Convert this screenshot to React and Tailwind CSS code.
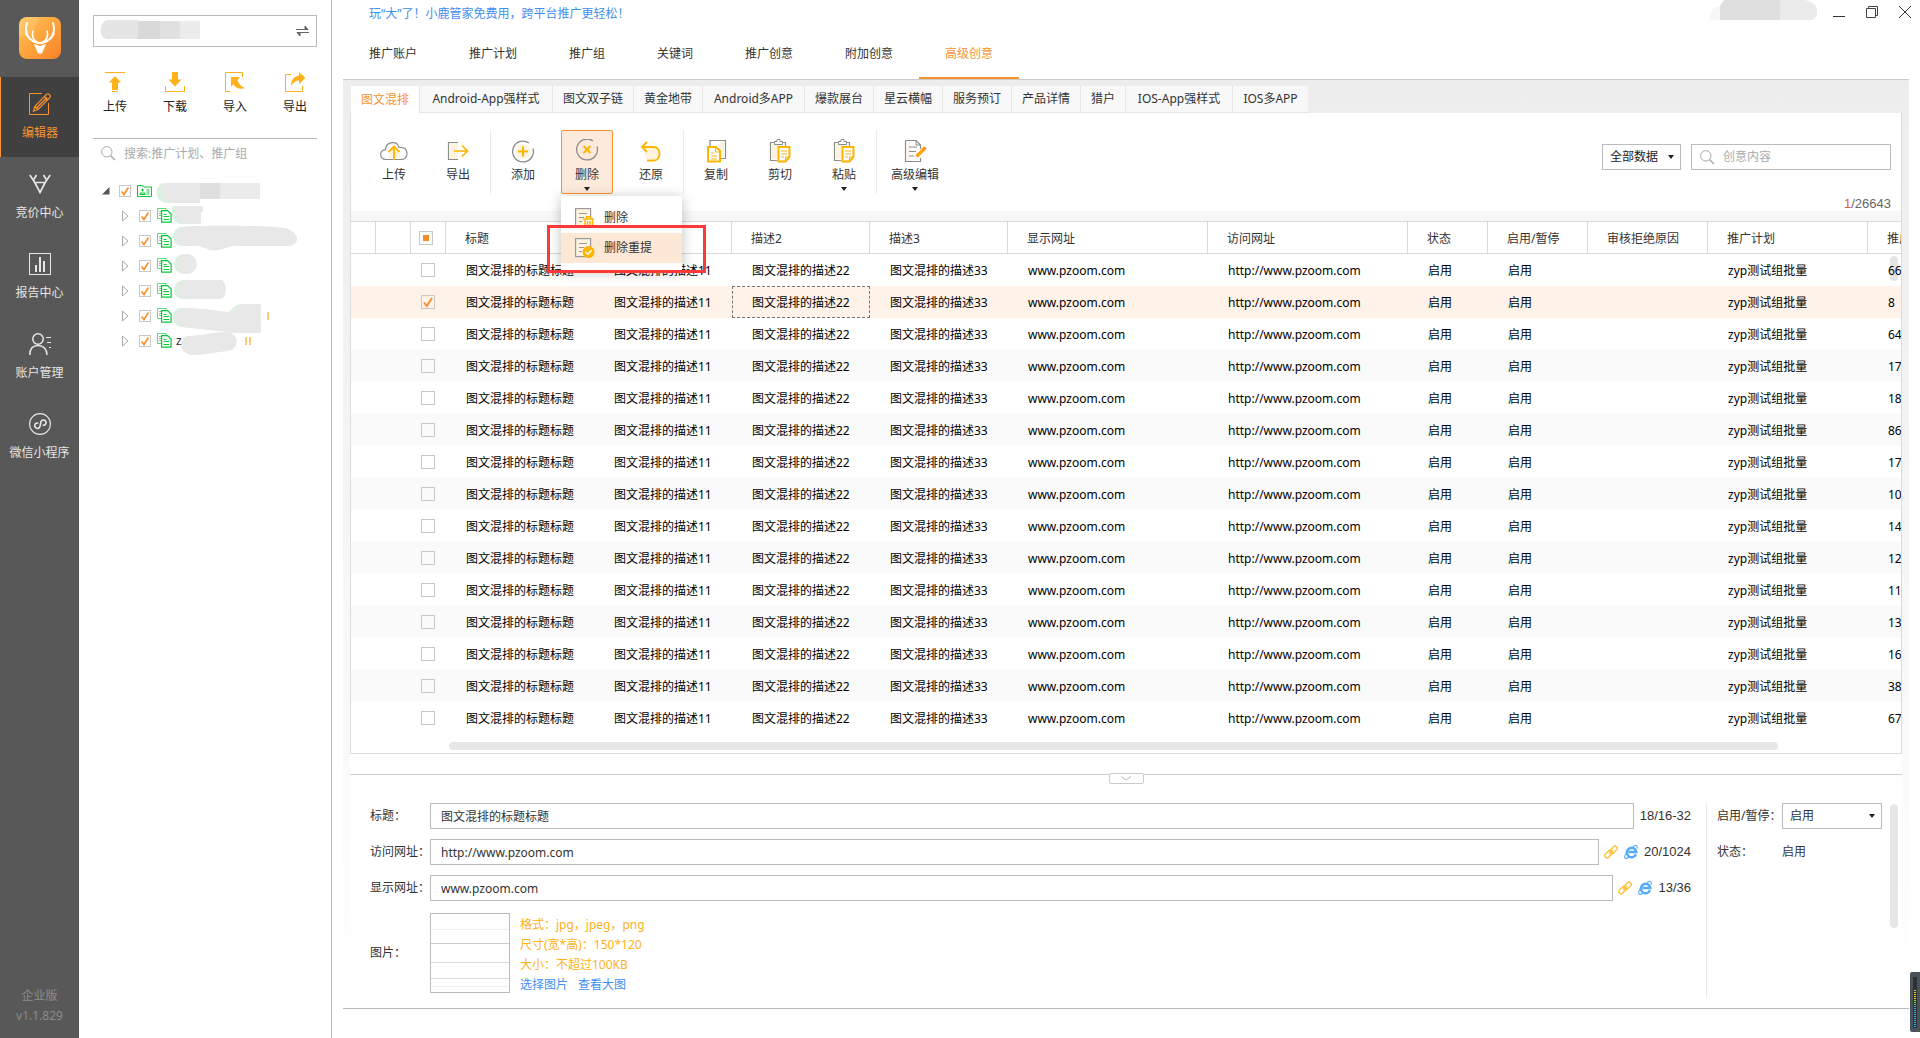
import React, { useState } from "react";

const SIDE_ITEMS = [
  { key: "editor", label: "编辑器" },
  { key: "bid", label: "竞价中心" },
  { key: "report", label: "报告中心" },
  { key: "account", label: "账户管理" },
  { key: "mini", label: "微信小程序" },
];

const LEVEL_TABS = ["推广账户", "推广计划", "推广组", "关键词", "推广创意", "附加创意", "高级创意"];

const CREATIVE_TABS = [
  { name: "图文混排", width: "w-[68px]" },
  { name: "Android-App强样式", width: "w-[133px]" },
  { name: "图文双子链", width: "w-[81px]" },
  { name: "黄金地带", width: "w-[69px]" },
  { name: "Android多APP", width: "w-[102px]" },
  { name: "爆款展台", width: "w-[69px]" },
  { name: "星云横幅", width: "w-[69px]" },
  { name: "服务预订", width: "w-[69px]" },
  { name: "产品详情", width: "w-[69px]" },
  { name: "猎户", width: "w-[45px]" },
  { name: "IOS-App强样式", width: "w-[107px]" },
  { name: "IOS多APP", width: "w-[76px]" },
];

const HEADERS = ["标题", "描述1", "描述2", "描述3", "显示网址", "访问网址", "状态", "启用/暂停", "审核拒绝原因", "推广计划", "推广组"];

const GROUP_IDS = ["660", "8", "645", "172", "186", "862", "173", "104", "147", "125", "118", "136", "162", "384", "671"];

const ROWS = GROUP_IDS.map((id, i) => ({
  id: i,
  cells: [
    "图文混排的标题标题",
    "图文混排的描述11",
    "图文混排的描述22",
    "图文混排的描述33",
    "www.pzoom.com",
    "http://www.pzoom.com",
    "启用",
    "启用",
    "",
    "zyp测试组批量",
    id,
  ],
}));

/* ---------- icons ---------- */

const Logo = () => (
  <svg width="42" height="42" viewBox="0 0 42 42" aria-label="小鹿管家">
    <defs>
      <linearGradient id="logo" x1="0" y1="0" x2="1" y2="1">
        <stop offset="0" stopColor="#fdc75a" />
        <stop offset="0.5" stopColor="#fda43c" />
        <stop offset="1" stopColor="#f9812a" />
      </linearGradient>
    </defs>
    <rect width="42" height="42" rx="8" fill="url(#logo)" />
    <path d="M0 20C10 19 18 12 20 0H8a8 8 0 0 0-8 8z" fill="#fff" opacity=".12" />
    <g fill="none" stroke="#fff" strokeLinecap="round">
      <path d="M8 6c-3 9 1 19 13 20 12-1 16-11 13-20" strokeWidth="2" />
      <path d="M14 14c-2 5 1 10 5 12M28 14c2 5-1 10-5 12" strokeWidth="1.6" />
      <path d="M7 17c2 4 5 6 9 8M35 17c-2 4-5 6-9 8" strokeWidth="1.4" />
    </g>
    <path d="M15 27l6 2 6-2-4 9.500h-4z" fill="#fff" />
  </svg>
);

const SideIcon = ({ name }) => (
  <svg width="22" height="22" viewBox="0 0 22 22" fill="none" stroke="currentColor">
    {name === "editor" && (
      <>
        <path d="M13 .5H.5v21h19V10" />
        <path d="M4.500 18l1.200-4.500L17.500 1.300a1.800 1.800 0 0 1 2.600 0l.7.7a1.800 1.800 0 0 1 0 2.600L9 16.500zM15.500 3.500l3 3M5.700 13.500L9 16.500M7.500 15L18 4.500" strokeWidth="1.200" />
      </>
    )}
    {name === "bid" && (
      <path d="M.8 2l5 7.500h10.400l5-7.500M7.500 2L4.500 7M14.500 2l3 5M5.800 9.500L11 19.500l5.200-10" strokeWidth="1.700" />
    )}
    {name === "report" && (
      <>
        <rect x=".5" y=".5" width="21" height="21" />
        <path d="M7 12v7M11 4v15M15 8v11" strokeWidth="2" />
      </>
    )}
    {name === "account" && (
      <>
        <circle cx="9" cy="6" r="5.200" strokeWidth="1.500" />
        <path d="M.8 22c0-6 3-9.500 8.200-9.500s9 3.500 9 9.500" strokeWidth="1.500" />
        <path d="M17 4.500h5M18 9.500h4M20 14.500h2" />
      </>
    )}
    {name === "mini" && (
      <>
        <circle cx="11" cy="11" r="10.400" strokeWidth="1.100" />
        <path d="M9.200 10.500a2.700 2.700 0 1 0 2.300 2.700V8.700a2.600 2.600 0 1 1 2.300 2.800" strokeWidth="1.600" transform="rotate(12 11 11)" />
      </>
    )}
  </svg>
);

const FileIcon = ({ name }) => (
  <svg width="20" height="20" viewBox="0 0 20 20" fill="none" stroke="#ffb11b">
    {name === "上传" && (
      <>
        <path d="M0 .5h20M7 19.500h6" />
        <path d="M10 4l6 6.500h-3V18H7v-7.500H4z" fill="#ffb11b" stroke="none" />
      </>
    )}
    {name === "下载" && (
      <>
        <path d="M.5 14v5.500h19V14" />
        <path d="M7 0h6v7.500h3.500L10 14.500 3.500 7.500H7z" fill="#ffb11b" stroke="none" />
      </>
    )}
    {name === "导入" && (
      <>
        <path d="M17.500 5V.5H.5v19h5" />
        <path d="M6 5h9l-2.500 3c1 4 3.500 6.500 7.500 8-5 1.500-9 .5-11.500-3.500L6 14.500z" fill="#ffb11b" stroke="none" />
      </>
    )}
    {name === "导出" && (
      <>
        <path d="M6 2.500H.5v17h17V14" />
        <path d="M14 0l6.500 6-6.500 6V8.500C11 8.500 8.500 10 6 14c0-6 3-9.800 8-10.200z" fill="#ffb11b" stroke="none" />
      </>
    )}
  </svg>
);

const SearchIcon = () => (
  <svg width="15" height="15" viewBox="0 0 15 15" fill="none" stroke="#aaa" className="shrink-0">
    <circle cx="5.800" cy="5.800" r="5.200" />
    <path d="M9.500 9.500l4.500 4.500" strokeWidth="1.500" />
  </svg>
);

const Caret = () => (
  <svg width="6" height="4" viewBox="0 0 6 4" fill="#222">
    <path d="M0 0h6L3 4z" />
  </svg>
);

const ToolIcon = ({ name }) => (
  <svg width="28" height="24" viewBox="0 0 28 24" fill="none" stroke="#8c8c8c">
    {name === "cloud" && (
      <>
        <path d="M6 20.500c-7-.5-7-9-.5-9.800C6 2.500 17 1 19 8.500c5-.8 8.500 2 8 6.500-.4 3.500-2.500 5.500-6 5.500z" fill="#fff" strokeWidth="1.200" />
        <path d="M9 11h11v8H9z" fill="#fdf4e0" stroke="none" />
        <path d="M14 21V8.500M8.500 13L14 7.500l5.500 5.500" stroke="#ffb400" strokeWidth="1.800" />
      </>
    )}
    {name === "export" && (
      <>
        <path d="M6 4h8v16H6z" fill="#fdf4e0" stroke="none" />
        <path d="M14 3.500H4.500v17H14" strokeWidth="1.200" />
        <path d="M10 12h13M18 6.500l5.500 5.500-5.500 5.500" stroke="#ffb400" strokeWidth="1.700" />
      </>
    )}
    {name === "add" && (
      <>
        <circle cx="14" cy="12.500" r="7.500" fill="#fdf4e0" stroke="none" />
        <path d="M20 4a10.400 10.400 0 1 0 4 5.500" strokeWidth="1.300" />
        <path d="M14 7.500v10M9 12.500h10" stroke="#ffb400" strokeWidth="2" />
      </>
    )}
    {name === "remove" && (
      <>
        <path d="M20 2a10.400 10.400 0 1 0 4 5.500" strokeWidth="1.300" />
        <path d="M10.500 7l7 7M17.500 7l-7 7" stroke="#ffb400" strokeWidth="2" />
      </>
    )}
    {name === "undo" && (
      <>
        <path d="M7 9h11c4 1 4 10 0 11H9z" fill="#fdf4e0" stroke="none" />
        <path d="M10 3L5 8l5 5M5 8h11.500c8 0 8 13.500 0 13.500H10" stroke="#ffb400" strokeWidth="1.900" />
      </>
    )}
    {name === "copy" && (
      <>
        <path d="M8 7V1.500h15.500v18H19" strokeWidth="1.200" />
        <path d="M18 3h4v15h-4z" fill="#fdf4e0" stroke="none" />
        <path d="M6 8h8l4 4v10.500H6z" fill="#fff" stroke="#ffb400" strokeWidth="2" />
        <path d="M13.500 8v5H18M9 14h3M9 17h6M9 20h6" stroke="#ffb400" />
      </>
    )}
    {name === "paste" && (
      <>
        <path d="M6 5h6v15H6z" fill="#fdf4e0" stroke="none" />
        <path d="M11 21.500H4.500v-18H9M16 3.500h3.500V7" strokeWidth="1.200" />
        <path d="M8.500 5.500v-3h2.500v-2h3v2h2.500v3z" fill="#fff" />
        <path d="M12.500 8h11v10l-4 4.500h-7z" fill="#fff" stroke="#ffb400" strokeWidth="2" />
        <path d="M15 12h6M15 15h6M15 18h3M19.500 22v-4H23" stroke="#ffb400" />
      </>
    )}
    {name === "advanced" && (
      <>
        <path d="M4.500 1.500H15l4.500 4.500v4M19.500 19v3.500h-15v-21" fill="#fff" strokeWidth="1.200" />
        <path d="M6 3h3v18H6z" fill="#fdf4e0" stroke="none" />
        <path d="M15 1.500V6h4.500M8 8h8M8 12.500h7M8 17h5" />
        <path d="M15.500 17.500L23 10" stroke="#ffa200" strokeWidth="3.200" />
        <path d="M22.500 10.500l2-2" stroke="#ff8a1f" strokeWidth="3.200" />
      </>
    )}
  </svg>
);

const MenuDoc = ({ done }) => (
  <svg width="20" height="20" viewBox="0 0 20 20" fill="none" stroke="#999">
    <rect x=".6" y=".6" width="15" height="18" fill="#fdf4e0" strokeWidth="1.200" />
    <path d="M4 5.500h8M4 9.500h5M4 13.500h3" />
    {done ? (
      <>
        <circle cx="13.500" cy="14" r="6" fill="#ffb400" stroke="none" />
        <path d="M10.500 14l2.200 2.200 4-4" stroke="#fff" strokeWidth="1.600" />
      </>
    ) : (
      <>
        <path d="M9 10h10v10H9z" fill="#fff" stroke="none" />
        <path d="M8 11h11M11.500 11V8.800h4V11M10 12v8h7.500V12M12.500 13v6M15 13v6" stroke="#ffb400" strokeWidth="1.500" />
      </>
    )}
  </svg>
);

const CopyDocs = () => (
  <svg width="15" height="15" viewBox="0 0 15 15" fill="none" stroke="#07c838" className="shrink-0">
    <path d="M4 10.500H.5V.5H9V3M2 3.500h2M2 5.500h2M2 7.500h2" opacity=".65" />
    <path d="M4.600 2.600h6l3.500 3.500v8H4.600z" fill="#fff" strokeWidth="1.200" />
    <path d="M6.500 6.500h3M6.500 8.500h5.500M6.500 11.500h5.500" />
  </svg>
);

const LinkIcon = () => (
  <svg width="14" height="14" viewBox="0 0 14 14" fill="none" stroke="#ffc23d" strokeWidth="1.400">
    <rect x="5.600" y="2.600" width="8" height="4.400" rx="1.200" transform="rotate(-45 9.600 4.800)" />
    <rect x=".4" y="7" width="8" height="4.400" rx="1.200" transform="rotate(-45 4.400 9.200)" />
    <path d="M5 9l4-4" />
  </svg>
);

const BrowserIcon = () => (
  <svg width="14" height="14" viewBox="0 0 14 14" fill="none" stroke="#55abf7">
    <path d="M12 9.300A4.700 4.700 0 1 1 12.300 7H4.500" strokeWidth="2.400" />
    <path d="M9 1.500C12-.3 14 .5 13 3.500M3.500 6C.5 9.500-.3 13.500 2 13.400c1 0 2-.6 3-1.400" strokeWidth="1.100" />
  </svg>
);

/* ---------- small controls ---------- */

const CHECK_BG =
  "appearance-none block shrink-0 border border-[#c8c8c8] bg-transparent";

const CheckBox = ({ label, checked, partial, small, onChange }) => (
  <span className={small ? "relative block w-3 h-3 shrink-0" : "relative block w-3.5 h-3.5 shrink-0"}>
    <input
      type="checkbox"
      aria-label={label}
      checked={checked}
      onChange={onChange}
      className={`${CHECK_BG} ${small ? "w-3 h-3" : "w-3.5 h-3.5"}`}
    />
    {checked && (
      <svg viewBox="0 0 14 14" className="absolute inset-0 w-full h-full pointer-events-none">
        <path d="M3 7.500L5.800 11 11 3" fill="none" stroke="#f7922f" strokeWidth="2" />
      </svg>
    )}
    {partial && <span className="absolute left-1 top-1 w-1.5 h-1.5 bg-[#f98d22]"></span>}
  </span>
);

// Grey patches that cover account and plan names
const TREE_ROWS = [
  { path: "M0 0h27v6h-2v12H8C-2 18-2 2 0 0z", width: 28 },
  { path: "M8-4C20-6 100-6 112-2c12 5 12 16 0 17H58C48 16 42 22 34 18L26 15H8C-2 14-3-2 8-4z", width: 124 },
  { path: "M11-2a10 10 0 1 1 0 20a10 10 0 1 1 0-20z", width: 24 },
  { path: "M10-1h36c5 4 5 15 0 19H10C-2 17-2 1 10-1z", width: 50 },
  { path: "M8 2C30 2 45 6 56 6c4-5 8-8 14-8h15v29H60C42 24 24 23 8 21-3 19-3 3 8 2z", width: 85, mark: 1 },
  { path: "M12 5C30 4 36 1 50 1c14 1 14 17 2 19C40 21 30 24 16 24 2 22 2 7 12 5z", width: 63, mark: 2, text: "z" },
];

const Toolbar = () => {
  const [menuOpen, setMenuOpen] = useState(true);
  const btn = "flex flex-col items-center h-16 pt-2 border border-transparent leading-4 text-[#333] whitespace-nowrap";
  const divider = <span className="w-px h-16 bg-[#ebebeb] -mx-1.5"></span>;

  const Tool = ({ icon, label, caret, wide }) => (
    <button className={`${btn} ${wide ? "w-16" : "w-[52px]"}`}>
      <ToolIcon name={icon} />
      <span className="mt-1">{label}</span>
      {caret && <span className="mt-1"><Caret /></span>}
    </button>
  );

  return (
    <div className="flex justify-between items-start h-[98px] pl-[17px] pr-2.5">
      <div className="flex gap-3 pt-[17px]">
        <Tool icon="cloud" label="上传" />
        <Tool icon="export" label="导出" />
        {divider}
        <Tool icon="add" label="添加" />
        <div className="relative">
          <button
            onClick={() => setMenuOpen(!menuOpen)}
            className="flex flex-col items-center w-[52px] h-16 pt-2 border border-[#f9922d] rounded-xs bg-[#fdeadb] leading-4 text-[#333]"
          >
            <ToolIcon name="remove" />
            <span className="mt-1">删除</span>
            <span className="mt-1"><Caret /></span>
          </button>
          {menuOpen && (
            <div className="absolute z-10 left-0 top-[66px] w-[121px] py-[7px] bg-white shadow-[0_2px_12px_rgba(0,0,0,0.25)]">
              <button className="flex items-center w-full h-[30px] pl-3.5 gap-[9px] text-[#333]">
                <MenuDoc />
                <span>删除</span>
              </button>
              <button className="flex items-center w-full h-[30px] pl-3.5 gap-[9px] bg-[#fde7d5] text-[#333]">
                <MenuDoc done />
                <span>删除重提</span>
              </button>
              <div className="absolute -left-3.5 top-[29px] w-[159px] h-12 border-3 border-[#fd3838] pointer-events-none"></div>
            </div>
          )}
        </div>
        <Tool icon="undo" label="还原" />
        {divider}
        <Tool icon="copy" label="复制" />
        <Tool icon="paste" label="剪切" />
        <Tool icon="paste" label="粘贴" caret />
        {divider}
        <Tool icon="advanced" label="高级编辑" caret wide />
      </div>

      <div className="pt-[31px]">
        <div className="flex gap-2.5">
          <div className="relative">
            <select aria-label="数据范围" className="appearance-none w-[79px] h-[26px] pl-[7px] border border-[#bbb] bg-white text-[#222]">
              <option>全部数据</option>
            </select>
            <span className="absolute right-[7px] top-[11px] pointer-events-none"><Caret /></span>
          </div>
          <div className="flex items-center w-[200px] h-[26px] pl-2 gap-2 border border-[#bbb]">
            <SearchIcon />
            <input aria-label="创意内容" placeholder="创意内容" className="flex-1 min-w-0 outline-none placeholder:text-[#aaa]" />
          </div>
        </div>
        <p className="mt-[26px] h-4 leading-4 text-right text-[13px] text-[#666] font-['Liberation_Sans',sans-serif]">
          <span className="text-[#e2574c]">1</span>/26643
        </p>
      </div>
    </div>
  );
};

const CreativeTable = () => {
  const [selected, setSelected] = useState([1]);

  const toggle = (id) =>
    setSelected(selected.includes(id) ? selected.filter((s) => s !== id) : [...selected, id]);

  return (
    <div className="relative overflow-hidden border-t border-[#d9d9d9]">
      <table className="w-full min-w-[1400px] table-fixed border-separate border-spacing-0 text-left">
        <colgroup>
          <col className="w-[25px]" />
          <col className="w-[35px]" />
          <col className="w-[35px]" />
          <col className="w-[148px]" />
          <col className="w-[138px]" />
          <col className="w-[138px]" />
          <col className="w-[138px]" />
          <col className="w-[200px]" />
          <col className="w-[200px]" />
          <col className="w-20" />
          <col className="w-[100px]" />
          <col className="w-[120px]" />
          <col className="w-40" />
          <col />
        </colgroup>
        <thead>
          <tr className="text-[#333] whitespace-nowrap">
            <th className="h-8 border-b border-r border-[#d9d9d9]"></th>
            <th className="border-b border-r border-[#d9d9d9]"></th>
            <th className="pl-2 border-b border-r border-[#d9d9d9]">
              <CheckBox label="全选" checked={false} partial={selected.length > 0} onChange={() => setSelected([])} />
            </th>
            {HEADERS.map((h, i) => (
              <th
                key={h}
                className={`pl-[19px] pt-0.5 font-normal border-b border-[#d9d9d9] overflow-hidden ${
                  i < HEADERS.length - 1 ? "border-r" : ""
                }`}
              >
                {h}
              </th>
            ))}
          </tr>
        </thead>
        <tbody className="text-black whitespace-nowrap">
          {ROWS.map((row, i) => {
            const on = selected.includes(row.id);
            return (
              <tr key={row.id} className={on ? "bg-[#fef2e9]" : i % 2 ? "bg-[#fafafa]" : "bg-white"}>
                <td className="h-8"></td>
                <td></td>
                <td className="pl-2.5">
                  <CheckBox label={`选择第${i + 1}行`} checked={on} onChange={() => toggle(row.id)} />
                </td>
                {row.cells.map((cell, c) => (
                  <td
                    key={c}
                    className={
                      i === 1 && c === 2
                        ? "pl-[19px] pt-0.5 overflow-hidden border border-dashed border-[#777]"
                        : "pl-5 pt-0.5 overflow-hidden"
                    }
                  >
                    {cell}
                  </td>
                ))}
              </tr>
            );
          })}
        </tbody>
      </table>
      <div className="absolute right-[3px] top-[34px] w-2 h-[25px] rounded-full bg-black/10"></div>
      <div className="mt-2 mb-[3px] ml-[98px] mr-[123px] h-2 rounded-full bg-[#e7e7e7]"></div>
    </div>
  );
};

const Field = ({ id, label, value, count, withLinks }) => (
  <div className="flex items-center h-[26px]">
    <label htmlFor={id} className="w-[60px] shrink-0 whitespace-nowrap">{label}：</label>
    <input id={id} defaultValue={value} className="flex-1 min-w-0 h-[26px] px-2.5 border border-[#bbb] bg-white text-[#333] outline-none" />
    {withLinks && (
      <span className="flex gap-1.5 pl-[5px]">
        <button aria-label="编辑链接"><LinkIcon /></button>
        <button aria-label="打开网页"><BrowserIcon /></button>
      </span>
    )}
    <span className="pl-1.5 text-[13px] font-['Liberation_Sans',sans-serif]">{count}</span>
  </div>
);

const DetailPanel = () => (
  <div className="bg-white">
    <div className="flex justify-center h-[29px] pt-[19px]">
      <div className="flex-1 h-px mt-px bg-[#ccc]"></div>
      <button aria-label="收起" className="flex justify-center items-center w-[35px] h-[11px] border border-[#ccc] rounded-xs">
        <svg width="10" height="5" viewBox="0 0 10 5" fill="none" stroke="#bbb">
          <path d="M0 .5l5 3.500 5-3.500" />
        </svg>
      </button>
      <div className="flex-1 h-px mt-px bg-[#ccc]"></div>
    </div>
    <div className="flex h-[225px] pt-5 pl-5 text-[#333]">
      <div className="flex-1 min-w-0 flex flex-col gap-2.5 pr-[15px]">
        <Field id="title" label="标题" value="图文混排的标题标题" count="18/16-32" />
        <Field id="visit" label="访问网址" value="http://www.pzoom.com" count="20/1024" withLinks />
        <Field id="show" label="显示网址" value="www.pzoom.com" count="13/36" withLinks />
        <div className="flex items-center">
          <span className="w-[60px]">图片：</span>
          <div className="flex flex-col w-20 h-20 border border-[#bbb]">
            <div className="h-4 border-b border-[#eee]"></div>
            <div className="h-3.5 border-b border-[#ccc]"></div>
            <div className="h-[19px] border-b border-[#ddd]"></div>
            <div className="h-4 border-b border-[#ddd]"></div>
            <div className="h-2 border-b border-[#eee]"></div>
          </div>
          <div className="pl-2.5 pt-1 leading-5 text-[#ffb11b]">
            <p>格式：jpg，jpeg，png</p>
            <p>尺寸(宽*高)：150*120</p>
            <p>大小：不超过100KB</p>
            <p className="flex gap-2.5 text-[#3f8ff0]">
              <a href="#choose">选择图片</a>
              <a href="#preview">查看大图</a>
            </p>
          </div>
        </div>
      </div>
      <div className="flex w-[196px] h-[195px] border-l border-[#ebebeb] pl-2.5">
        <div className="flex-1">
          <div className="flex items-center h-[26px]">
            <label htmlFor="enabled" className="w-[65px] whitespace-nowrap">启用/暂停：</label>
            <div className="relative">
              <select id="enabled" className="appearance-none w-[100px] h-[26px] pl-[7px] border border-[#bbb] bg-white">
                <option>启用</option>
                <option>暂停</option>
              </select>
              <span className="absolute right-[7px] top-[11px] pointer-events-none"><Caret /></span>
            </div>
          </div>
          <div className="flex items-center h-[26px] mt-2.5">
            <span className="w-[65px]">状态：</span>
            <span>启用</span>
          </div>
        </div>
        <div className="w-2 h-[124px] mr-1 mt-px rounded-full bg-[#e7e7e7]"></div>
      </div>
    </div>
  </div>
);

const AccountPanel = () => (
  <aside className="w-[253px] shrink-0 border-r border-[#b8b8b8] px-3.5 pt-[15px] bg-white">
    <div className="flex items-center justify-between w-[224px] h-8 pl-1.5 pr-[7px] border border-[#bbb]">
      <svg width="120" height="22" viewBox="0 0 120 22">
        <path d="M8 0h30v19H8C-2 19-2 1 8 0z" fill="#e5e5e5" />
        <path d="M38 1h22v18H38z" fill="#d9d9d9" />
        <path d="M60 1h20v18H60z" fill="#e1e1e1" />
        <path d="M80 1h20v18H80z" fill="#ececec" />
      </svg>
      <button aria-label="切换账户">
        <svg width="13" height="10" viewBox="0 0 13 10" stroke="#666" fill="#666">
          <path d="M0 3.500h12L9 0v3M13 6.500H1L4 10V7" />
        </svg>
      </button>
    </div>

    <div className="flex justify-between w-[224px] h-[92px] pt-[25px] border-b border-[#bbb] text-[#222]">
      {["上传", "下载", "导入", "导出"].map((name) => (
        <button key={name} className="flex flex-col items-center w-11 gap-[7px] leading-4">
          <FileIcon name={name} />
          <span>{name}</span>
        </button>
      ))}
    </div>

    <div className="flex items-center h-[29px] pl-2 gap-2">
      <SearchIcon />
      <input aria-label="搜索" placeholder="搜索:推广计划、推广组" className="flex-1 min-w-0 outline-none placeholder:text-[#aaa]" />
    </div>

    <ul className="pt-2.5">
      <li className="flex items-center h-[25px] pl-[9px]">
        <svg width="8" height="8" viewBox="0 0 8 8" className="mr-[9px]">
          <path d="M7.500 0v7.500H0z" fill="#555" />
        </svg>
        <CheckBox small label="账户" checked onChange={() => {}} />
        <svg width="15" height="12" viewBox="0 0 15 12" fill="none" stroke="#07c838" className="ml-1.5 mr-1 shrink-0">
          <path d="M.5.5h5l1 1.500h8v9.500H.5z" />
          <path d="M3 9.500h5V8H3zM5.500 3.500v3M4 5h3M9.500 5h3M9.500 7h3M9.500 9h3" />
        </svg>
        <svg width="104" height="16" viewBox="0 0 104 16" className="shrink-0 overflow-visible">
          <path d="M6 0C-2 4-2 18 10 20h14V0z" fill="#d9f3e0" />
          <path d="M6 0h38v20H14C4 16 4 6 6 0z" fill="#e9e9e9" />
          <path d="M44 0h20v16H44z" fill="#dfdfdf" />
          <path d="M64 0h40v16H64z" fill="#ebebeb" />
        </svg>
      </li>
      {TREE_ROWS.map((row, i) => (
        <li key={i} className="flex items-center h-[25px] pl-[29px]">
          <button aria-label="展开" className="mr-2.5">
            <svg width="7" height="12" viewBox="0 0 7 12" fill="none" stroke="#aaa">
              <path d="M.5 1v10L6 6z" />
            </svg>
          </button>
          <CheckBox small label={`计划${i + 1}`} checked onChange={() => {}} />
          <span className="ml-1.5 flex"><CopyDocs /></span>
          <span className="relative flex items-center ml-1">
            {row.text && <span className="absolute left-0 text-[#333]">{row.text}</span>}
            <svg width={row.width} height="20" viewBox={`0 0 ${row.width} 20`} className="overflow-visible">
              {!row.text && <path d={row.path} fill="#d8f3df" transform="translate(-3 0)" />}
              <path d={row.path} fill="#e8e8e8" />
            </svg>
          </span>
          {row.mark && (
            <span className="flex gap-0.5 ml-1.5">
              <span className="w-0.5 h-2 bg-[#ffc878]"></span>
              {row.mark === 2 && <span className="w-0.5 h-2 bg-[#ffc878]"></span>}
            </span>
          )}
        </li>
      ))}
    </ul>
  </aside>
);

const App = () => {
  const [tab, setTab] = useState("图文混排");

  return (
    <div className="relative flex min-h-screen bg-white text-xs font-['Noto_Sans','Noto_Sans_CJK_SC',sans-serif]">
      {/* Module navigation */}
      <nav className="flex flex-col w-[79px] shrink-0 bg-[#585858] text-[#e6e6e6]">
        <div className="flex justify-center h-[77px] pt-[17px]">
          <Logo />
        </div>
        {SIDE_ITEMS.map((item, i) => (
          <button
            key={item.key}
            className={
              i === 0
                ? "flex flex-col items-center h-20 pt-4 gap-2.5 leading-4 border-l border-[#f7922f] bg-[#404040] text-[#f7922f]"
                : "flex flex-col items-center h-20 pt-4 gap-2.5 leading-4"
            }
          >
            <SideIcon name={item.key} />
            <span>{item.label}</span>
          </button>
        ))}
        <div className="mt-auto pb-3 text-center leading-5 text-[#8c8c8c]">
          <p>企业版</p>
          <p>v1.1.829</p>
        </div>
      </nav>

      <AccountPanel />

      <main className="flex-1 min-w-0 px-[11px]">
        <header className="flex justify-between h-7 pl-[26px]">
          <a href="#news" className="leading-7 text-[#3f8ff0]">玩“大”了！小鹿管家免费用，跨平台推广更轻松！</a>
          <div className="flex items-start text-[#444]">
            <svg width="108" height="20" viewBox="0 0 108 20">
              <path d="M0 20c0-8 5-14 11-14v14z" fill="#f7f7f7" />
              <path d="M11 6l4-6h56v20H11z" fill="#dfdfdf" />
              <path d="M71 0h24c18 3 15 17 8 20H71z" fill="#ebebeb" />
            </svg>
            <button aria-label="最小化" className="ml-4 mt-1.5">
              <svg width="12" height="12" viewBox="0 0 12 12" stroke="#333"><path d="M0 10.500h12" /></svg>
            </button>
            <button aria-label="还原窗口" className="ml-[21px] mt-1.5">
              <svg width="12" height="12" viewBox="0 0 12 12" fill="none" stroke="#444">
                <path d="M.5 2.500h9v9h-9zM2.500 2.500v-2h9v9h-2" />
              </svg>
            </button>
            <button aria-label="关闭" className="ml-[21px] -mr-0.5 mt-1.5">
              <svg width="12" height="12" viewBox="0 0 12 12" stroke="#333"><path d="M0 0l12 12M12 0L0 12" /></svg>
            </button>
          </div>
        </header>

        {/* Level tabs */}
        <div className="flex h-[52px] border-b border-[#ccc] text-[#333]">
          {LEVEL_TABS.map((name) => (
            <button
              key={name}
              className={
                name === "高级创意"
                  ? "px-[26px] pt-0.5 border-b-2 border-[#f7922f] text-[#f7922f]"
                  : "px-[26px]"
              }
            >
              {name}
            </button>
          ))}
        </div>

        <div className="px-[7px] border-b border-[#bbb] bg-linear-to-b from-[#ededed] to-white">
          {/* Creative type tabs */}
          <div className="flex pl-px pt-1.5">
            {CREATIVE_TABS.map(({ name, width }) => (
              <button
                key={name}
                onClick={() => setTab(name)}
                className={
                  name === tab
                    ? `${width} h-[27px] whitespace-nowrap bg-white text-[#f7922f]`
                    : `${width} h-[27px] whitespace-nowrap border-l border-b border-[#e6e6e6] bg-[#f8f8f8] text-[#333]`
                }
              >
                {name}
              </button>
            ))}
          </div>

          <div className="border-x border-b border-[#dcdcdc] bg-white">
            <Toolbar />
            <div className="h-2.5 bg-[#f7f7f7]"></div>
            <CreativeTable />
          </div>

          <DetailPanel />
        </div>
      </main>

      {/* Desktop level meter docked to the window edge */}
      <div className="absolute right-0 bottom-1.5 w-2.5 h-[60px]">
        <svg width="10" height="60" viewBox="0 0 10 60">
          <rect width="12" height="60" rx="2" fill="#4a5258" />
          <rect x="3" y="5" width="4" height="51" fill="#2b3035" />
          <path d="M5 18v10" stroke="#e8d02c" strokeWidth="2" strokeDasharray="1 1" />
          <path d="M5 28v6" stroke="#7fd64b" strokeWidth="2" strokeDasharray="1 1" />
          <path d="M5 34v21" stroke="#2fb4f0" strokeWidth="2" strokeDasharray="1 1" />
        </svg>
      </div>
    </div>
  );
};

export default App;
